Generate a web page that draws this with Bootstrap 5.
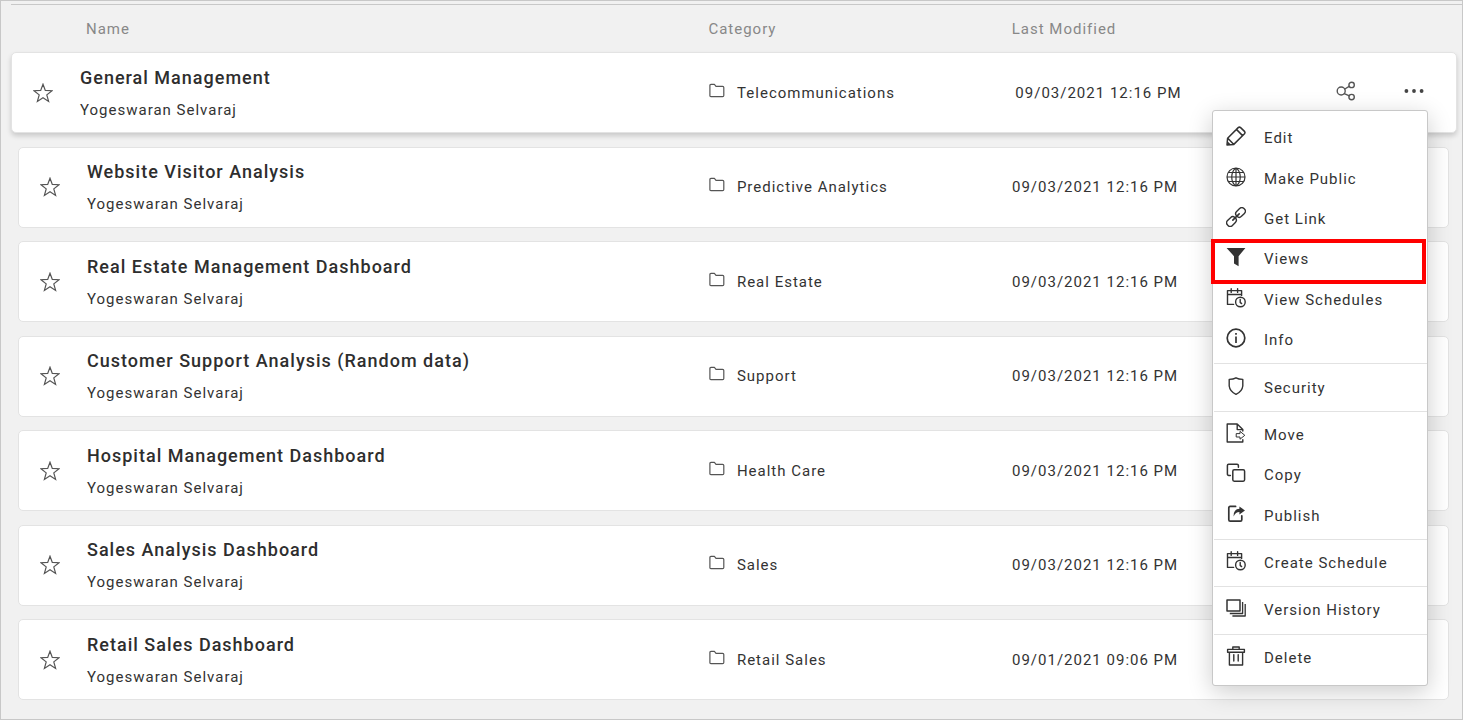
<!DOCTYPE html>
<html lang="en">
<head>
<meta charset="utf-8">
<meta name="viewport" content="width=device-width, initial-scale=1">
<title>Dashboards</title>
<link href="https://cdn.jsdelivr.net/npm/bootstrap@5.3.0/dist/css/bootstrap.min.css" rel="stylesheet">
<style>
  body { font-family: Roboto, "Liberation Sans", sans-serif; font-size: 15px; line-height: 20px; letter-spacing: 1px; color: #333; background: #f1f1f1; }
  .page-frame { border: 1px solid #c8c8c8; padding: 3px 0 19px 10px; }
  .board-table { border-top: 1px solid #c8c8c8; }
  .board-head { padding: 13px 14px 14px 7px; color: #888; }
  .board-head th { font-weight: 400; }
  .board-head .col-title { padding-left: 68px; }
  .board-list { padding-right: 5px; margin-top: -2px; }
  .board-row { margin: 0 8px 0 7px; min-height: 81px; background: #fff; border: 1px solid #e3e3e3; border-radius: 5px; }
  .board-row.is-active { margin: 0; box-shadow: 0 3px 5px rgba(0,0,0,.16); }
  .col-title { width: 48%; padding-left: 21px; }
  .col-cat { width: 21%; padding-left: 4px; }
  .col-date { width: 15%; padding-left: 7px; }
  .star-btn, .tool-btn { border: 0; background: none; padding: 0; color: #555; line-height: 0; }
  .star-btn { margin-right: 27px; }
  .board-name { font-size: 18px; line-height: 24px; font-weight: 500; color: #2e2e2e; margin: 0 0 10px; }
  .board-name a, .menu-link { color: inherit; text-decoration: none; }
  .tool-btn { height: 22px; }
  .row-menu { top: 57px; right: 28px; width: 216px; min-height: 576px; padding: 7px 0; border: 1px solid #c8c8c8; border-radius: 3px; font-size: 15px; color: #333; box-shadow: 0 6px 24px rgba(0,0,0,.2); }
  .row-menu li { min-height: 40px; }
  .row-menu .menu-rule { min-height: 0; margin: 3px 0 3px 1px; border-top: 1px solid #e2e2e2; }
  .menu-link { padding-left: 13px; gap: 18px; }
  .menu-link svg { margin-bottom: 4px; }
  .is-marked::after { content: ""; position: absolute; inset: 0 1px -4px -2px; border: 4px solid #f00; pointer-events: none; }
  .ico { fill: none; stroke: currentColor; stroke-width: 1.4; stroke-linejoin: round; stroke-linecap: round; flex: none; }
</style>
</head>
<body>
<svg class="d-none">
  <symbol id="star" viewBox="0 0 20 20"><path stroke-width="1.2" stroke-linejoin="miter" d="M10 1.2 12.3 7.4 19 7.7 13.8 11.9 15.6 18.4 10 14.8 4.4 18.4 6.2 11.9 1 7.7 7.7 7.4Z"/></symbol>
  <symbol id="folder" viewBox="0 0 16 16"><path stroke="#555" stroke-width="1.2" d="M.9 12.4V2.6Q.9 1.4 2 1.4H5.4L7 3.3H13.6Q14.8 3.3 14.8 4.5V12.4Q14.8 13.6 13.6 13.6H2Q.9 13.6.9 12.4Z"/></symbol>
  <symbol id="share" viewBox="0 0 20 20"><circle cx="5.2" cy="10" r="4"/><circle cx="15.6" cy="3.9" r="2.7"/><circle cx="15.6" cy="16.1" r="2.7"/><path d="M8.8 8 13.2 5.4M8.3 12.6 13.4 14.8"/></symbol>
  <symbol id="dots" viewBox="0 0 20 20"><g fill="#444" stroke="none"><circle cx="2.4" cy="10" r="1.9"/><circle cx="10" cy="10" r="1.9"/><circle cx="17.6" cy="10" r="1.9"/></g></symbol>
  <symbol id="pencil" viewBox="0 0 20 20"><path stroke-width="1.5" d="M1 19 1.6 12.2 12.2 1.6Q13.4.6 14.6 1.6L18.5 5.4Q19.5 6.6 18.5 7.8L7.8 18.4ZM10.4 3.4 16.6 9.6M1.8 12.2 7.6 18.2M1.2 16 4 18.8"/></symbol>
  <symbol id="globe" viewBox="0 0 20 20"><path stroke-width="1.2" d="M10 1A9 9 0 0 1 10 19A9 9 0 0 1 10 1ZM10 1V19M1 10H19M2.8 5.5H17.2M2.8 14.5H17.2M10 1C4.3 5 4.3 15 10 19M10 1C15.7 5 15.7 15 10 19"/></symbol>
  <symbol id="chain" viewBox="0 0 20 20"><g transform="rotate(-45 10 10)"><rect x="-1.6" y="6.6" width="10.4" height="6.8" rx="3.1"/><rect x="11.2" y="6.6" width="10.4" height="6.8" rx="3.1"/><path stroke-width="1.6" d="M5.5 10H14.5"/></g></symbol>
  <symbol id="funnel" viewBox="0 0 20 20"><path fill="currentColor" stroke="none" d="M.6 1H19.4L12.6 9.2V19.2L8 16.6V9.2Z"/></symbol>
  <symbol id="calendar" viewBox="0 0 20 20"><path d="M7.6 16.4H1.5V2.6H15.6V7.4M1.5 6.5H15.6M5.2.8V4.4M11.6.8V4.4"/><circle cx="14.4" cy="14" r="4.8"/><path d="M14.2 11.4V14.4L15.6 15.6"/></symbol>
  <symbol id="info" viewBox="0 0 20 20"><circle cx="10" cy="10" r="8.8" stroke-width="1.7"/><path stroke-width="1.7" stroke-linecap="butt" d="M10 8.4V15M10 5V6.8"/></symbol>
  <symbol id="shield" viewBox="0 0 20 20"><path stroke-width="1.4" d="M10 1.8Q12.6 3.4 16.8 3.4V10Q16.2 15.4 10 18.4Q3.8 15.4 3.2 10V3.4Q7.4 3.4 10 1.8Z"/></symbol>
  <symbol id="move" viewBox="0 0 20 20"><path d="M16.8 16.6V19H1.2V1H11.2L16.8 6.6V8M11.2 1V6.6H16.8"/><path stroke-width="1" d="M10.6 10.6H14V8.4L18.8 12.3 14 16.2V14H10.6Z"/></symbol>
  <symbol id="copy" viewBox="0 0 20 20"><rect x="6.8" y="6.8" width="11.8" height="11.4" rx="1.4" stroke-width="1.5"/><path stroke-width="1.5" d="M4.4 12.4H2.8Q1.4 12.4 1.4 11V2.4Q1.4 1.2 2.6 1.2H11Q12.4 1.2 12.4 2.6V4.2"/></symbol>
  <symbol id="publish" viewBox="0 0 20 20"><path stroke-width="1.7" d="M9.6 2.4H4.2Q2.8 2.4 2.8 3.8V15.8Q2.8 17.2 4.2 17.2H14.4Q15.8 17.2 15.8 15.8V11.8"/><path fill="currentColor" stroke="none" d="M13.4 2.6 19 6.4 13.4 10.4V8Q9.6 8 7.6 12.4 7.4 5.2 13.4 4.8Z"/></symbol>
  <symbol id="layers" viewBox="0 0 20 20"><rect x="1" y="2" width="13" height="11" stroke-width="1.5"/><path stroke-width="1.3" stroke-linecap="butt" d="M16.6 4V15.5H3.8M19.2 6V18H6.4"/></symbol>
  <symbol id="trash" viewBox="0 0 20 20"><path stroke-width="1.4" d="M1.6 3.4H18.4V6.2H1.6ZM6.8 3.2V1H13.2V3.2M3.4 6.4V19H16.6V6.4M7.8 8.6V15M12.2 8.6V15"/></symbol>
</svg>

<main class="page-frame d-flex flex-column min-vh-100">
  <table class="board-table d-flex flex-column flex-grow-1">
    <thead class="d-block">
      <tr class="board-head d-flex">
        <th class="col-title" scope="col">Name</th>
        <th class="col-cat" scope="col">Category</th>
        <th class="col-date" scope="col">Last Modified</th>
        <td class="flex-fill"></td>
      </tr>
    </thead>
    <tbody class="board-list d-flex flex-column justify-content-between flex-grow-1">
      <tr class="board-row is-active d-flex align-items-stretch position-relative">
        <td class="col-title d-flex align-items-center"><button class="star-btn" type="button" aria-label="Favourite"><svg class="ico" width="20" height="20"><use href="#star"/></svg></button><div><h2 class="board-name"><a href="#">General Management</a></h2><div>Yogeswaran Selvaraj</div></div></td>
        <td class="col-cat d-flex align-items-center gap-2"><svg class="ico me-1 mb-1" width="16" height="16"><use href="#folder"/></svg>Telecommunications</td>
        <td class="col-date d-flex align-items-center">09/03/2021 12:16 PM</td>
        <td class="flex-fill d-flex align-items-center justify-content-end pe-4">
          <div class="d-flex gap-5 pe-2 mb-1">
            <button class="tool-btn" type="button" aria-label="Share"><svg class="ico" width="20" height="20"><use href="#share"/></svg></button>
            <button class="tool-btn" type="button" aria-label="More actions" aria-expanded="true"><svg class="ico" width="20" height="20"><use href="#dots"/></svg></button>
          </div>
          <ul class="row-menu dropdown-menu show d-flex flex-column">
            <li class="d-flex flex-grow-1"><a class="menu-link d-flex align-items-center flex-fill" href="#"><svg class="ico" width="20" height="20"><use href="#pencil"/></svg>Edit</a></li>
            <li class="d-flex flex-grow-1"><a class="menu-link d-flex align-items-center flex-fill" href="#"><svg class="ico" width="20" height="20"><use href="#globe"/></svg>Make Public</a></li>
            <li class="d-flex flex-grow-1"><a class="menu-link d-flex align-items-center flex-fill" href="#"><svg class="ico" width="20" height="20"><use href="#chain"/></svg>Get Link</a></li>
            <li class="d-flex flex-grow-1 position-relative is-marked"><a class="menu-link d-flex align-items-center flex-fill" href="#"><svg class="ico" width="20" height="20"><use href="#funnel"/></svg>Views</a></li>
            <li class="d-flex flex-grow-1"><a class="menu-link d-flex align-items-center flex-fill" href="#"><svg class="ico" width="20" height="20"><use href="#calendar"/></svg>View Schedules</a></li>
            <li class="d-flex flex-grow-1"><a class="menu-link d-flex align-items-center flex-fill" href="#"><svg class="ico" width="20" height="20"><use href="#info"/></svg>Info</a></li>
            <li class="menu-rule" role="separator"></li>
            <li class="d-flex flex-grow-1"><a class="menu-link d-flex align-items-center flex-fill" href="#"><svg class="ico" width="20" height="20"><use href="#shield"/></svg>Security</a></li>
            <li class="menu-rule" role="separator"></li>
            <li class="d-flex flex-grow-1"><a class="menu-link d-flex align-items-center flex-fill" href="#"><svg class="ico" width="20" height="20"><use href="#move"/></svg>Move</a></li>
            <li class="d-flex flex-grow-1"><a class="menu-link d-flex align-items-center flex-fill" href="#"><svg class="ico" width="20" height="20"><use href="#copy"/></svg>Copy</a></li>
            <li class="d-flex flex-grow-1"><a class="menu-link d-flex align-items-center flex-fill" href="#"><svg class="ico" width="20" height="20"><use href="#publish"/></svg>Publish</a></li>
            <li class="menu-rule" role="separator"></li>
            <li class="d-flex flex-grow-1"><a class="menu-link d-flex align-items-center flex-fill" href="#"><svg class="ico" width="20" height="20"><use href="#calendar"/></svg>Create Schedule</a></li>
            <li class="menu-rule border-2" role="separator"></li>
            <li class="d-flex flex-grow-1"><a class="menu-link d-flex align-items-center flex-fill" href="#"><svg class="ico" width="20" height="20"><use href="#layers"/></svg>Version History</a></li>
            <li class="menu-rule" role="separator"></li>
            <li class="d-flex flex-grow-1"><a class="menu-link d-flex align-items-center flex-fill" href="#"><svg class="ico" width="20" height="20"><use href="#trash"/></svg>Delete</a></li>
          </ul>
        </td>
      </tr>
      <tr class="board-row d-flex align-items-stretch">
        <td class="col-title d-flex align-items-center"><button class="star-btn" type="button" aria-label="Favourite"><svg class="ico" width="20" height="20"><use href="#star"/></svg></button><div><h2 class="board-name"><a href="#">Website Visitor Analysis</a></h2><div>Yogeswaran Selvaraj</div></div></td>
        <td class="col-cat d-flex align-items-center gap-2"><svg class="ico me-1 mb-1" width="16" height="16"><use href="#folder"/></svg>Predictive Analytics</td>
        <td class="col-date d-flex align-items-center">09/03/2021 12:16 PM</td>
      </tr>
      <tr class="board-row d-flex align-items-stretch">
        <td class="col-title d-flex align-items-center"><button class="star-btn" type="button" aria-label="Favourite"><svg class="ico" width="20" height="20"><use href="#star"/></svg></button><div><h2 class="board-name"><a href="#">Real Estate Management Dashboard</a></h2><div>Yogeswaran Selvaraj</div></div></td>
        <td class="col-cat d-flex align-items-center gap-2"><svg class="ico me-1 mb-1" width="16" height="16"><use href="#folder"/></svg>Real Estate</td>
        <td class="col-date d-flex align-items-center">09/03/2021 12:16 PM</td>
      </tr>
      <tr class="board-row d-flex align-items-stretch">
        <td class="col-title d-flex align-items-center"><button class="star-btn" type="button" aria-label="Favourite"><svg class="ico" width="20" height="20"><use href="#star"/></svg></button><div><h2 class="board-name"><a href="#">Customer Support Analysis (Random data)</a></h2><div>Yogeswaran Selvaraj</div></div></td>
        <td class="col-cat d-flex align-items-center gap-2"><svg class="ico me-1 mb-1" width="16" height="16"><use href="#folder"/></svg>Support</td>
        <td class="col-date d-flex align-items-center">09/03/2021 12:16 PM</td>
      </tr>
      <tr class="board-row d-flex align-items-stretch">
        <td class="col-title d-flex align-items-center"><button class="star-btn" type="button" aria-label="Favourite"><svg class="ico" width="20" height="20"><use href="#star"/></svg></button><div><h2 class="board-name"><a href="#">Hospital Management Dashboard</a></h2><div>Yogeswaran Selvaraj</div></div></td>
        <td class="col-cat d-flex align-items-center gap-2"><svg class="ico me-1 mb-1" width="16" height="16"><use href="#folder"/></svg>Health Care</td>
        <td class="col-date d-flex align-items-center">09/03/2021 12:16 PM</td>
      </tr>
      <tr class="board-row d-flex align-items-stretch">
        <td class="col-title d-flex align-items-center"><button class="star-btn" type="button" aria-label="Favourite"><svg class="ico" width="20" height="20"><use href="#star"/></svg></button><div><h2 class="board-name"><a href="#">Sales Analysis Dashboard</a></h2><div>Yogeswaran Selvaraj</div></div></td>
        <td class="col-cat d-flex align-items-center gap-2"><svg class="ico me-1 mb-1" width="16" height="16"><use href="#folder"/></svg>Sales</td>
        <td class="col-date d-flex align-items-center">09/03/2021 12:16 PM</td>
      </tr>
      <tr class="board-row d-flex align-items-stretch">
        <td class="col-title d-flex align-items-center"><button class="star-btn" type="button" aria-label="Favourite"><svg class="ico" width="20" height="20"><use href="#star"/></svg></button><div><h2 class="board-name"><a href="#">Retail Sales Dashboard</a></h2><div>Yogeswaran Selvaraj</div></div></td>
        <td class="col-cat d-flex align-items-center gap-2"><svg class="ico me-1 mb-1" width="16" height="16"><use href="#folder"/></svg>Retail Sales</td>
        <td class="col-date d-flex align-items-center">09/01/2021 09:06 PM</td>
      </tr>
    </tbody>
  </table>
</main>
<script src="https://cdn.jsdelivr.net/npm/bootstrap@5.3.0/dist/js/bootstrap.bundle.min.js"></script>
</body>
</html>
